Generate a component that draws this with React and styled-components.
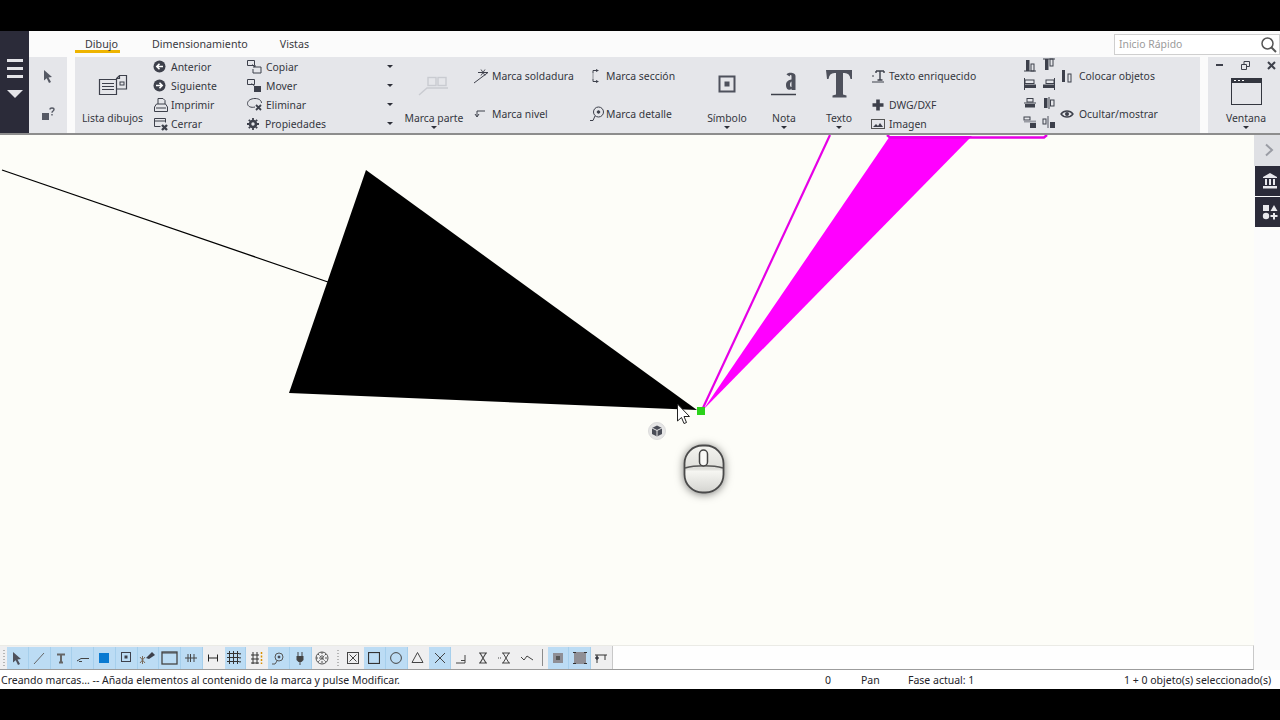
import React from "react";
import styled, { createGlobalStyle } from "styled-components";

const Global = createGlobalStyle`
  html, body { margin: 0; padding: 0; background: #000; }
  body { font-family: "Noto Sans", "Open Sans", sans-serif; }
  * { box-sizing: border-box; }
`;

const Page = styled.div`
  width: 1280px; height: 720px; display: flex; flex-direction: column; background: #000; overflow: hidden;
`;
const BlackBand = styled.div`
  height: ${p => p.$h}px; flex: none; background: #000;
`;
const Ribbon = styled.header`
  height: 104px; flex: none; display: flex; border-bottom: 2px solid #8d8d8d; background: #fbfbfb;
`;
const Rail = styled.div`
  width: 29px; flex: none; background: #2b2b39; display: flex; flex-direction: column; align-items: center; padding-top: 28px; gap: 5px;
`;
const RailBar = styled.span`
  width: 16px; height: 3px; background: #e4e4e8; display: block;
`;
const RailTriangle = styled.span`
  margin-top: 7px; width: 0; height: 0; border-left: 8px solid transparent; border-right: 8px solid transparent; border-top: 8px solid #e4e4e8;
`;
const RibbonMain = styled.div`
  flex: 1; min-width: 0; display: flex; flex-direction: column;
`;
const TabRow = styled.nav`
  height: 26px; flex: none; display: flex; padding-left: 46px; gap: 32px; position: relative; color: #3a3a3f; font-size: 10.7px;
`;
const Tab = styled.div`
  height: 22px; line-height: 26px; white-space: nowrap; ${p => p.$active ? "padding: 0 2px 0 10px; border-bottom: 3px solid #eeb400;" : ""}
`;
const Search = styled.div`
  margin-left: auto; width: 166px; height: 21px; margin-top: 3px; border: 1px solid #cfcfcf; background: #fff; display: flex; align-items: center; padding: 0 1px 2px 4px; font-size: 10.4px; color: #9a9a9a;
  span { flex: 1; }
  svg { margin-top: 2px; }
`;
const RibbonBody = styled.div`
  height: 76px; flex: none; display: flex; gap: 8px; font-size: 10.4px; color: #34363e;
`;
const Panel = styled.section`
  width: ${p => p.$w}px; flex: none; background: #e5e6ea; display: flex;
`;
const SelectStack = styled.div`
  display: flex; flex-direction: column; width: 100%;
`;
const SelectCell = styled.div`
  height: 38px; display: flex; align-items: center; justify-content: center;
`;
const Large = styled.div`
  width: ${p => p.$w}px; flex: none; display: flex; flex-direction: column; align-items: center;
`;
const WindowPanel = styled(Large)`
  padding-left: 4px;
`;
const LargeIcon = styled.div`
  height: 54px; display: flex; align-items: center; justify-content: center;
`;
const LargeLabel = styled.div`
  height: 14px; line-height: 14px; white-space: nowrap;
`;
const Caret = styled.span`
  display: block; width: 0; height: 0; border-left: 3px solid transparent; border-right: 3px solid transparent; border-top: 3px solid #2d2f38; flex: none;
`;
const LargeCaret = styled(Caret)`
  margin-top: 1px;
`;
const Stack = styled.div`
  width: ${p => p.$w}px; flex: none; padding-left: ${p => p.$pad}px; display: flex; flex-direction: column;
`;
const Row = styled.div`
  height: ${p => p.$h || 19}px; flex: none; display: flex; align-items: center; gap: ${p => p.$gap}px; white-space: nowrap;
`;
const RowEnd = styled.span`
  margin-left: auto; padding-right: 7px; display: flex;
`;
const AlignGrid = styled.div`
  width: 38px; flex: none; display: grid; grid-template-columns: repeat(2, 19px); grid-auto-rows: 19px; align-items: center; justify-items: center;
`;
const WindowControls = styled.div`
  height: 14px; margin-top: 1px; display: flex; justify-content: space-between; width: 100%; padding: 0 4px; align-items: center;
`;
const WindowIcon = styled.div`
  height: 39px; display: flex; align-items: center;
`;
const Middle = styled.main`
  height: 510px; flex: none; display: flex;
`;
const Canvas = styled.div`
  width: 1254px; flex: none; position: relative; background: #fdfdf8;
`;
const Drawing = styled.svg`
  display: block; width: 1254px; height: 510px;
`;
const Badge = styled.div`
  position: absolute; left: 648px; top: 287px; width: 18px; height: 18px; border-radius: 50%; background: #e6e6e6; border: 1px solid #dcdcdc; display: flex; align-items: center; justify-content: center;
`;
const MouseHint = styled.div`
  position: absolute; left: 682px; top: 308px; filter: drop-shadow(0 1px 4px rgba(0,0,0,.5));
`;
const SideStrip = styled.aside`
  width: 26px; flex: none; background: #fbfbfb; display: flex; flex-direction: column;
`;
const SideChevron = styled.div`
  height: 31px; background: #dfe0e4; display: flex; align-items: center; justify-content: center; padding: 0 0 2px 4px;
`;
const SideDark = styled.div`
  height: 30px; margin-left: 1px; margin-bottom: 1px; background: #2b2b39; display: flex; align-items: center; justify-content: center; padding-left: 4px;
`;
const ToolArea = styled.div`
  height: 25px; flex: none; background: #fbfbfb; display: flex;
`;
const ToolRow = styled.div`
  width: 1254px; flex: none; background: #fefefe; border-top: 1px solid #ebebe6; border-bottom: 1px solid #9c9c9c; border-right: 1px solid #c9c9c9; display: flex;
`;
const ToolBar = styled.div`
  width: 613px; height: 23px; background: #efeff0; border-right: 1px solid #c8c8c8; display: flex; align-items: center;
`;
const Grip = styled.span`
  width: ${p => p.$w}px; flex: none; align-self: stretch; display: flex; align-items: center; justify-content: center;
  &::before { content: ""; width: 2px; height: 16px; background: repeating-linear-gradient(#b5b5b5 0 1px, transparent 1px 3px); }
`;
const Sep = styled.span`
  width: 9.5px; flex: none; display: flex; justify-content: center;
  &::before { content: ""; width: 1px; height: 17px; background: #8b8b8b; }
`;
const ToolBtn = styled.button`
  width: 21.75px; height: 22px; flex: none; padding: 0; display: flex; align-items: center; justify-content: center;
  background: ${p => p.$on ? "#bcdcf4" : "transparent"};
  border: 0; border-right: 1px solid ${p => p.$on ? "#a6cfec" : "transparent"};
`;
const StatusBar = styled.footer`
  height: 19px; flex: none; background: #fff; display: flex; align-items: center; font-size: 10.5px; color: #24242a; white-space: nowrap;
`;
const StatusCell = styled.span`
  width: ${p => p.$w}px; flex: none; padding-left: ${p => p.$pad || 0}px;
`;

const C = "#3d404b";
const Svg = ({ s = 16, w, h, children, vb }) => (
  <svg width={w || s} height={h || s} viewBox={vb || `0 0 ${w || s} ${h || s}`} fill="none" stroke={C} strokeWidth="1">{children}</svg>
);

const ArrowBtn = ({ left }) => (
  <Svg s={13}><circle cx="6.5" cy="6.5" r="6" fill={C} stroke="none" />
    <path d={left ? "M10 6.5H4M6.5 3.8L3.8 6.5l2.7 2.7" : "M3 6.5h6M6.5 3.8l2.7 2.7-2.7 2.7"} stroke="#fff" strokeWidth="1.6" /></Svg>
);
const icons = {
  pointer: <Svg s={14}><path d="M3 1l8 7-3.5.4L10 13l-2 1-2.3-4.7L3 11.500z" fill="#555964" stroke="none" /></Svg>,
  help: <Svg s={16}><rect x="2" y="7" width="7" height="7" fill="#555964" stroke="none" /><path d="M10 3.5c0-2 4-2 4 0 0 1.600-2 1.400-2 3.300M12 8v1.500" stroke="#555964" strokeWidth="1.400" /></Svg>,
  list: <Svg w={30} h={24}><path d="M1.500 7.500h17v15h-17zM4 11.500h12M4 14.500h12M4 17.500h12" strokeWidth="1.200" /><path d="M18.500 17h10V3.500h-7l-3 3V7.500M21.500 3.500v3h-3" strokeWidth="1.200" /><rect x="22" y="10" width="4" height="3" /></Svg>,
  print: <Svg s={16}><path d="M5 7V1.500h5l2 2V7M1.500 14.500V10l2-3h9l2 3v4.500z" /><path d="M3 11h10" /></Svg>,
  close: <Svg s={16}><path d="M1.500 2.500h11v4M1.500 2.500v8h6M1.500 5h11" /><path d="M9 9l5 5M14 9l-5 5" stroke={C} strokeWidth="2.400" /></Svg>,
  copy: <Svg s={16}><path d="M1.500 1.500h7v5h-7zM9 8h6v6H7V10" /><path d="M6 5.500l3 2.500M9 6v2H7" /></Svg>,
  move: <Svg s={16}><path d="M1.500 1.500h7v5h-7z" /><rect x="8" y="8" width="7" height="6" fill={C} stroke="none" /><path d="M5.500 5.500l3 2.500" /></Svg>,
  erase: <Svg s={17}><path d="M9 11c-4 1-7.500-.5-7.500-3.500S5 2.500 9 2.500s6.500 2 6.500 4.500" /><path d="M10 9l5 5M15 9l-5 5" strokeWidth="1.800" /></Svg>,
  gear: <Svg s={14}><circle cx="7" cy="7" r="3" stroke={C} strokeWidth="2.600" /><path d="M7 1v2M7 11v2M1 7h2M11 7h2M2.800 2.800l1.400 1.400M9.800 9.800l1.400 1.400M11.200 2.800L9.800 4.200M4.200 9.800l-1.400 1.400" strokeWidth="1.800" /></Svg>,
  part: <Svg w={32} h={26}><g stroke="#c9cbd1" strokeWidth="1.400"><path d="M1 24l8-7h21" /><rect x="10" y="6.500" width="8" height="8" /><rect x="20" y="6.500" width="8" height="8" /></g></Svg>,
  weld: <Svg s={16}><path d="M1 15L15 4.500H5" /><path d="M8 1.500l4 6M12 1.500l-4 6M6.500 4.500h7" strokeWidth=".9" /></Svg>,
  level: <Svg s={14}><path d="M12 4H4v5M2 7l2 3 2-3" /></Svg>,
  section: <Svg s={14}><path d="M4 1.500h3M4 1.500v3M4 9.500v3h3" /><path d="M4 5.500v3" strokeDasharray="1 1" /><path d="M7 0l3 1.500L7 3zM7 11l3 1.500L7 14z" fill={C} stroke="none" /></Svg>,
  detail: <Svg s={16}><circle cx="9.500" cy="6" r="5" /><circle cx="9.500" cy="6" r="1.300" fill={C} /><path d="M1 14.500h3L6 10" /></Svg>,
  symbol: <Svg s={18}><rect x="1.500" y="1.500" width="15" height="15" strokeWidth="2" stroke="#4e515c" /><rect x="6.500" y="6.500" width="5" height="5" fill="#4e515c" stroke="none" /></Svg>,
  note: <svg width="26" height="28" viewBox="0 0 26 28"><path d="M0 24.500h25" stroke="#3d404b" strokeWidth="1.500" /><path fillRule="evenodd" fill="#4e515c" d="M15.500 4.500c1-2.500 9-2.500 9 1.500V20h-4v-1.500c-1 2-5.500 2-5.500-3.500 0-3.500 2.500-5 5.500-5.500V6c0-1.300-1.500-1.300-1.800.5zM20.500 11.500c-2 .8-2 6 0 5.500z" /></svg>,
  text: <svg width="28" height="30" viewBox="0 0 28 30"><path d="M1 1h26v9h-1.500c-.5-4-2.500-6-6-6h-1.500v21.500l3.500 1v2H7.500v-2l3.500-1V4H9.500c-3.500 0-5.500 2-6 6H2z" fill="#4e515c" /></svg>,
  richtext: <Svg s={14}><path d="M5 2h8M9 2v9M6.500 11h5M5 2v2M13 2v2" strokeWidth="1.400" /><path d="M1 7h2M1 13h12" strokeWidth="1" /></Svg>,
  plus: <Svg s={14}><path d="M7 1.500v11M1.500 7h11" strokeWidth="3.600" stroke="#3d404b" /></Svg>,
  image: <Svg s={14}><rect x=".5" y="2.500" width="13" height="9" stroke="#555" /><path d="M2 10l3-3 2 2 2-3 3 4z" fill={C} stroke="none" /></Svg>,
  place: <Svg s={14}><rect x="2" y="1" width="3" height="12" fill={C} stroke="none" /><rect x="8" y="5" width="3" height="8" /></Svg>,
  eye: <Svg s={14}><path d="M1 7C4 3 10 3 13 7 10 11 4 11 1 7z" strokeWidth="1.300" /><circle cx="7" cy="7" r="2" fill={C} stroke="none" /></Svg>,
  a1: <Svg s={14}><path d="M1 13h12" /><rect x="3" y="2" width="3.500" height="11" fill={C} stroke="none" /><rect x="8" y="6" width="3" height="7" /></Svg>,
  a2: <Svg s={14}><path d="M1 1h12" /><rect x="3" y="1" width="3.500" height="11" fill={C} stroke="none" /><rect x="8" y="1" width="3" height="7" /></Svg>,
  a3: <Svg s={14}><path d="M1.500 1v12" /><rect x="2" y="3" width="9" height="3.500" /><rect x="2" y="7.500" width="11" height="3.500" fill={C} stroke="none" /></Svg>,
  a4: <Svg s={14}><path d="M12.500 1v12" /><rect x="4" y="3" width="8" height="3.500" /><rect x="1" y="7.500" width="11" height="3.500" fill={C} stroke="none" /></Svg>,
  a5: <Svg s={14}><path d="M1 7h12" /><rect x="4" y="2.500" width="6" height="3.500" /><rect x="2" y="8" width="10" height="3.500" fill={C} stroke="none" /></Svg>,
  a6: <Svg s={14}><path d="M7 1v12" /><rect x="2" y="2" width="3.500" height="10" fill={C} stroke="none" /><rect x="8.500" y="4" width="3.500" height="6" /></Svg>,
  a7: <Svg s={14}><rect x="1" y="2" width="6" height="3" /><rect x="1" y="5.500" width="12" height="2" fill="#9a9ca4" stroke="none" /><rect x="7" y="8" width="6" height="5" fill={C} stroke="none" /></Svg>,
  a8: <Svg s={14}><rect x="1" y="4" width="3" height="5" /><rect x="5" y="1" width="2" height="12" fill="#9a9ca4" stroke="none" /><rect x="8" y="7" width="5" height="6" fill={C} stroke="none" /></Svg>,
  minimize: <Svg s={8}><path d="M0 4h7" strokeWidth="2" /></Svg>,
  restore: <Svg s={9}><path d="M.5 3.500h5v5h-5zM3 3.500V.5h5.500v5H6" /></Svg>,
  x: <Svg s={9}><path d="M1 1l7 7M8 1L1 8" strokeWidth="2" /></Svg>,
  window: <svg width="31" height="27" viewBox="0 0 31 27"><rect x=".5" y=".5" width="30" height="26" fill="none" stroke="#33363f" /><rect x="0" y="0" width="31" height="5" fill="#33363f" /><path d="M3 2.500h2M7 2.500h2M11 2.500h2" stroke="#fff" /></svg>,
  search: <Svg s={18}><circle cx="7.500" cy="7.500" r="5.500" stroke="#555" strokeWidth="1.500" /><path d="M11.500 11.500L16 16" stroke="#555" strokeWidth="2" /></Svg>,
};

const tb = {
  arrow: <Svg s={14}><path d="M3 1l8 7-3.500.4L10 13l-2 1-2.300-4.700L3 11.500z" fill="#4e515c" stroke="none" /></Svg>,
  line: <Svg s={14}><path d="M2 13L12 2" stroke="#666" /></Svg>,
  t: <Svg s={12}><path d="M2 2.500h8M6 2.500v8M4 10.500h4" strokeWidth="2" stroke="#666" /></Svg>,
  dash: <Svg s={14}><path d="M1 10l4-2.500h8M3 10.500h3" stroke="#444" /></Svg>,
  blue: <Svg s={10}><rect width="10" height="10" fill="#0a7ad1" stroke="none" /></Svg>,
  dot: <Svg s={11}><rect x=".5" y=".5" width="9" height="9" /><rect x="3.500" y="3.500" width="3" height="3" fill={C} stroke="none" /></Svg>,
  wand: <Svg s={17}><path d="M7 9l6-6 3 3-6 4z" fill={C} stroke="none" /><path d="M1 8l5 6M6 8l-5 6M3.500 7v8" stroke="#7a6a5a" /></Svg>,
  rect: <Svg w={17} h={14}><rect x="1" y="1" width="15" height="12" stroke="#444" strokeWidth="1.300" /><path d="M1 2h15" stroke="#444" /></Svg>,
  hash: <Svg s={14}><path d="M1 7h12M4 3v8M6.500 3v8M10 3v8" stroke="#444" /></Svg>,
  dim: <Svg s={12}><path d="M1 6h10M1.500 2.500v7M10.500 2.500v7" stroke="#222" /></Svg>,
  grid: <Svg s={15}><path d="M0 3.500h12M0 7.500h12M0 11.500h12M2.500 1v13M6.500 1v13M10.500 1v13" stroke="#333" /><path d="M13 3v1.500M13 7v1.500M13 11v1.500" stroke="#333" strokeWidth="1.400" /></Svg>,
  gridO: <Svg s={14}><path d="M1 4h8M1 8h8M1 12h8M3 1v12M7 1v12" stroke="#333" /><path d="M11.500 1v12" stroke="#d89000" strokeDasharray="2 1.500" strokeWidth="1.500" /></Svg>,
  snap: <Svg s={14}><circle cx="8" cy="6" r="4" stroke="#555" /><circle cx="8" cy="6" r="1" fill="#555" /><path d="M1 13h3l2-3" stroke="#555" /></Svg>,
  plug: <Svg s={14}><path d="M5 1v4M9 1v4" stroke="#444" /><path d="M3.500 5h7v4l-2 2h-3l-2-2z" fill="#444" stroke="none" /><path d="M7 11v3" stroke="#444" /></Svg>,
  mesh: <Svg s={14}><circle cx="7" cy="7" r="6" stroke="#555" /><path d="M3 3l8 8M11 3l-8 8M1 7h12M7 1v12" stroke="#555" strokeDasharray="2 1" /></Svg>,
  boxx: <Svg s={12}><rect x=".5" y=".5" width="11" height="11" stroke="#444" /><path d="M2.500 2.500l7 7M9.500 2.500l-7 7" stroke="#444" /></Svg>,
  square: <Svg s={12}><rect x=".5" y=".5" width="11" height="11" stroke="#333" strokeWidth="1.200" /></Svg>,
  circle: <Svg s={12}><circle cx="6" cy="6" r="5.400" stroke="#444" /></Svg>,
  tri: <Svg s={13}><path d="M6.500 1.500l5.500 10H1z" stroke="#444" /></Svg>,
  cross: <Svg s={12}><path d="M1 1l10 10M11 1L1 11" stroke="#444" /></Svg>,
  corner: <Svg s={12}><path d="M1 11h9V3M6 8.500h4" stroke="#444" /></Svg>,
  hour: <Svg s={12}><path d="M2 1h8M2 11h8M3 1l6 10M9 1L3 11" stroke="#444" strokeWidth="1.100" /></Svg>,
  hourD: <Svg s={14}><path d="M4 2h8M4 12h8M5 2l6 10M11 2L5 12" stroke="#444" /><path d="M0 7h3" stroke="#444" strokeDasharray="1 1" /></Svg>,
  wave: <Svg s={14}><path d="M1 6l3 3 3-4 6 4" stroke="#444" /></Svg>,
  mid: <Svg s={10}><rect width="10" height="10" fill="#8f8f95" stroke="none" /><rect x="3" y="3" width="4" height="4" fill="#555" stroke="none" /></Svg>,
  big: <Svg s={14}><rect x="1" y="1" width="12" height="12" fill="#8f8f95" stroke="none" /><path d="M0 1.500h3M11 1.500h3M0 12.500h3M11 12.500h3" stroke="#333" /></Svg>,
  last: <Svg s={14}><path d="M1 4h12M3 4v8M11 4v5" stroke="#333" /><circle cx="3" cy="7" r="1.300" fill="#333" /></Svg>,
};

const firstTools = [["arrow",1],["line",1],["t",1],["dash",1],["blue",1],["dot",1],["wand",1],["rect",1],["hash",1],["dim",0],["grid",1],["gridO",0],["snap",1],["plug",1],["mesh",0]];
const secondTools = [["boxx",0],["square",1],["circle",1],["tri",0],["cross",1],["corner",0],["hour",0],["hourD",0],["wave",0]];
const thirdTools = [["mid",1],["big",1],["last",0]];
const alignKeys = ["a1","a2","a3","a4","a5","a6","a7","a8"];

const Tools = ({ list }) => list.map(([k, on], i) => <ToolBtn key={k + i} $on={!!on}>{tb[k]}</ToolBtn>);

const Item = ({ icon, label, gap, h, caret }) => (
  <Row $gap={gap} $h={h}>
    {icon}
    <span>{label}</span>
    {caret && <RowEnd><Caret /></RowEnd>}
  </Row>
);

const LargeBtn = ({ w, icon, label, caret = true }) => (
  <Large $w={w}>
    <LargeIcon>{icon}</LargeIcon>
    <LargeLabel>{label}</LargeLabel>
    {caret && <LargeCaret />}
  </Large>
);

export default function App() {
  return (
    <Page>
      <Global />
      <BlackBand $h={31} />
      <Ribbon>
        <Rail>
          <RailBar /><RailBar /><RailBar />
          <RailTriangle />
        </Rail>
        <RibbonMain>
          <TabRow>
            <Tab $active>Dibujo</Tab>
            <Tab>Dimensionamiento</Tab>
            <Tab>Vistas</Tab>
            <Search><span>Inicio Rápido</span>{icons.search}</Search>
          </TabRow>
          <RibbonBody>
            <Panel $w={38}>
              <SelectStack>
                <SelectCell>{icons.pointer}</SelectCell>
                <SelectCell>{icons.help}</SelectCell>
              </SelectStack>
            </Panel>
            <Panel $w={1125}>
              <LargeBtn w={75} icon={icons.list} label="Lista dibujos" caret={false} />
              <Stack $w={95} $pad={3}>
                <Item gap={5} icon={<ArrowBtn left />} label="Anterior" />
                <Item gap={5} icon={<ArrowBtn />} label="Siguiente" />
                <Item gap={2} icon={icons.print} label="Imprimir" />
                <Item gap={2} icon={icons.close} label="Cerrar" />
              </Stack>
              <Stack $w={155} $pad={1}>
                <Item gap={4} icon={icons.copy} label="Copiar" caret />
                <Item gap={4} icon={icons.move} label="Mover" caret />
                <Item gap={3} icon={icons.erase} label="Eliminar" caret />
                <Item gap={5} icon={icons.gear} label="Propiedades" caret />
              </Stack>
              <LargeBtn w={68} icon={icons.part} label="Marca parte" />
              <Stack $w={117} $pad={5}>
                <Item h={38} gap={3} icon={icons.weld} label="Marca soldadura" />
                <Item h={38} gap={5} icon={icons.level} label="Marca nivel" />
              </Stack>
              <Stack $w={113} $pad={4}>
                <Item h={38} gap={3} icon={icons.section} label="Marca sección" />
                <Item h={38} gap={1} icon={icons.detail} label="Marca detalle" />
              </Stack>
              <LargeBtn w={58} icon={icons.symbol} label="Símbolo" />
              <LargeBtn w={56} icon={icons.note} label="Nota" />
              <LargeBtn w={54} icon={icons.text} label="Texto" />
              <Stack $w={154} $pad={5}>
                <Item h={38} gap={4} icon={icons.richtext} label="Texto enriquecido" />
                <Item gap={4} icon={icons.plus} label="DWG/DXF" />
                <Item gap={4} icon={icons.image} label="Imagen" />
              </Stack>
              <AlignGrid>
                {alignKeys.map(k => <span key={k}>{icons[k]}</span>)}
              </AlignGrid>
              <Stack $w={142} $pad={2}>
                <Item h={38} gap={5} icon={icons.place} label="Colocar objetos" />
                <Item h={38} gap={5} icon={icons.eye} label="Ocultar/mostrar" />
              </Stack>
            </Panel>
            <Panel $w={72}>
              <WindowPanel $w={72}>
                <WindowControls>{icons.minimize}{icons.restore}{icons.x}</WindowControls>
                <WindowIcon>{icons.window}</WindowIcon>
                <LargeLabel>Ventana</LargeLabel>
                <LargeCaret />
              </WindowPanel>
            </Panel>
          </RibbonBody>
        </RibbonMain>
      </Ribbon>
      <Middle>
        <Canvas>
          <Drawing viewBox="0 135 1254 510">
            <path d="M2 170L328 282" stroke="#000" strokeWidth="1.300" fill="none" />
            <path d="M366 170L289 393L697 410z" fill="#000" />
            <path d="M702 410L830 135" stroke="#e600e6" strokeWidth="2.200" fill="none" />
            <path d="M703 410L890 136H972z" fill="#ff00ff" />
            <path d="M887 135l3 2.500H1044l3-2.500" stroke="#e600e6" strokeWidth="2.400" fill="none" />
            <rect x="697" y="407" width="8" height="8" fill="#2bd21b" />
            <path d="M677.500 404v17l4-3.500 2.500 6 2.500-1-2.500-6h5.500z" fill="#fff" stroke="#222" strokeWidth="1" />
          </Drawing>
          <Badge>
            <svg width="12" height="12" viewBox="0 0 12 12"><path d="M6 .5l5 2.500v6L6 11.500 1 9V3z" fill="#4a4d57" /><path d="M1 3l5 2.500L11 3M6 5.500v6" stroke="#e6e6e6" fill="none" /></svg>
          </Badge>
          <MouseHint>
            <svg width="44" height="52" viewBox="0 0 44 52">
              <defs>
                <linearGradient id="mouseBody" x1="0" y1="0" x2="0" y2="1">
                  <stop offset="0" stopColor="#f4f4f0" />
                  <stop offset="0.5" stopColor="#dededa" />
                  <stop offset="0.55" stopColor="#f6f6f2" />
                  <stop offset="1" stopColor="#d4d4d0" />
                </linearGradient>
              </defs>
              <rect x="2.500" y="2.500" width="39" height="47" rx="18" fill="url(#mouseBody)" stroke="#4a4a4a" strokeWidth="1.800" />
              <path d="M3 25c10-3 28-3 38 0" stroke="#555" strokeWidth="1.500" fill="none" />
              <rect x="17.500" y="7" width="8" height="16" rx="4" fill="#f8f8f6" stroke="#444" strokeWidth="1.500" />
            </svg>
          </MouseHint>
        </Canvas>
        <SideStrip>
          <SideChevron>
            <svg width="10" height="14" viewBox="0 0 10 14"><path d="M2 1.500L8 7l-6 5.500" stroke="#9a9ca4" strokeWidth="2" fill="none" /></svg>
          </SideChevron>
          <SideDark>
            <svg width="16" height="16" viewBox="0 0 16 16" fill="#e8e8ec"><path d="M8 0l7 4v1H1V4z" /><rect x="3" y="6" width="2" height="6" /><rect x="7" y="6" width="2" height="6" /><rect x="11" y="6" width="2" height="6" /><rect x="1" y="13" width="14" height="2.500" /></svg>
          </SideDark>
          <SideDark>
            <svg width="16" height="16" viewBox="0 0 16 16" fill="#e8e8ec"><rect x="1" y="1" width="6" height="6" /><path d="M12 1l3.500 6h-7z" /><circle cx="4" cy="12" r="3.200" /><path d="M11 9h2v2h2.500v2H13v2.500h-2V13H8.500v-2H11z" /></svg>
          </SideDark>
        </SideStrip>
      </Middle>
      <ToolArea>
        <ToolRow>
          <ToolBar>
            <Grip $w={7} />
            <Tools list={firstTools} />
            <Grip $w={9} />
            <Tools list={secondTools} />
            <Sep />
            <Tools list={thirdTools} />
          </ToolBar>
        </ToolRow>
      </ToolArea>
      <StatusBar>
        <StatusCell $w={825} $pad={1}>Creando marcas... -- Añada elementos al contenido de la marca y pulse Modificar.</StatusCell>
        <StatusCell $w={36}>0</StatusCell>
        <StatusCell $w={47}>Pan</StatusCell>
        <StatusCell $w={216}>Fase actual: 1</StatusCell>
        <StatusCell $w={156}>1 + 0 objeto(s) seleccionado(s)</StatusCell>
      </StatusBar>
      <BlackBand $h={32} />
    </Page>
  );
}
